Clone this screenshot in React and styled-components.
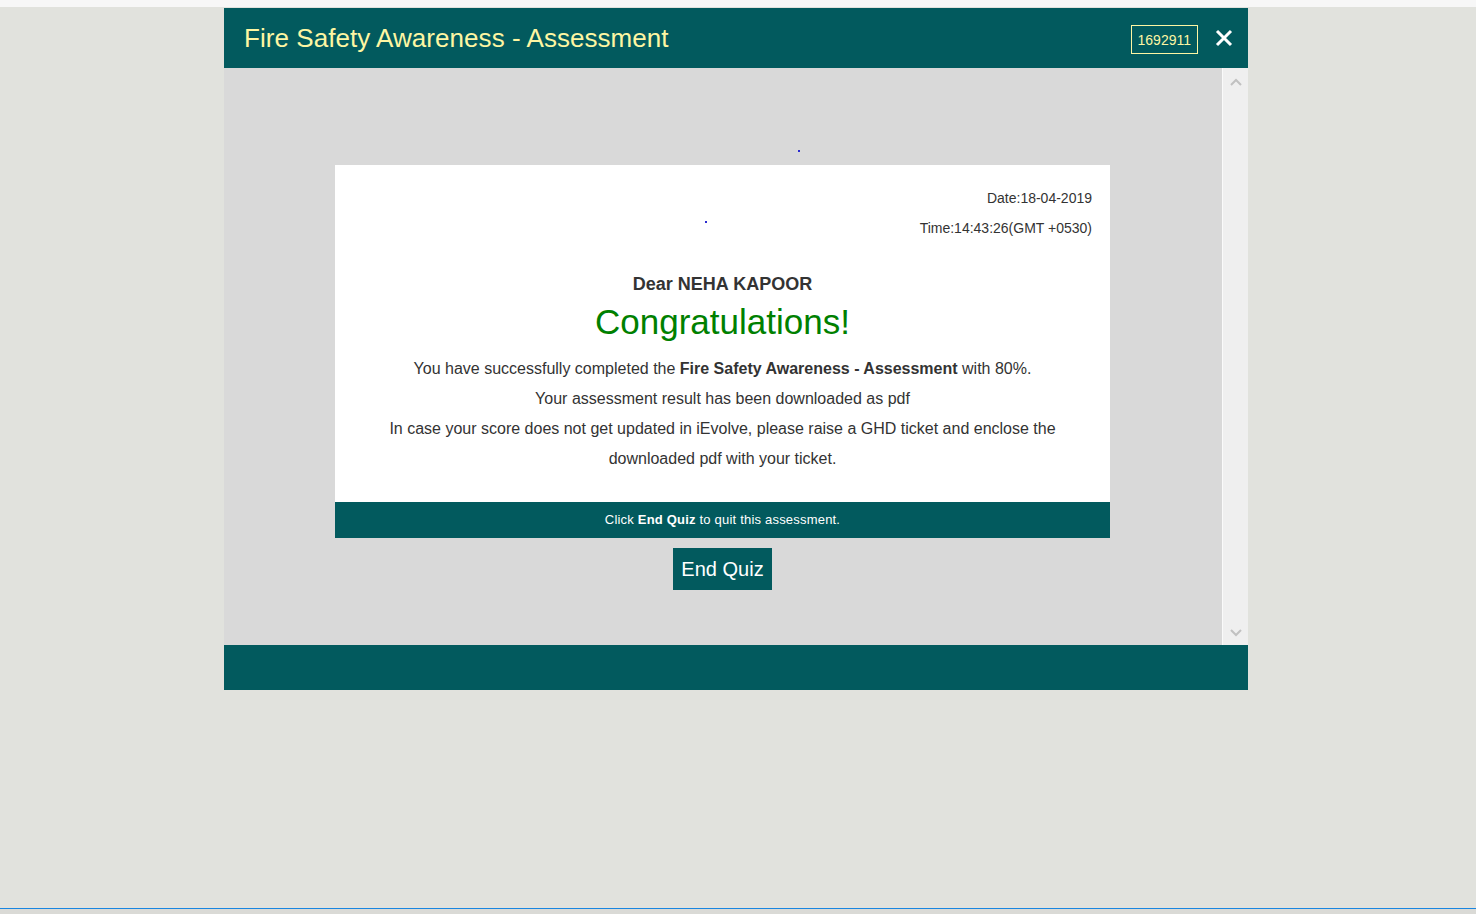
import styled, { createGlobalStyle } from "styled-components";

const GlobalStyle = createGlobalStyle`
  html, body {
    margin: 0;
    padding: 0;
    height: 100%;
    overflow: hidden;
  }
  body {
    font-family: "Liberation Sans", Arial, sans-serif;
    background: #e1e2dd;
  }
`;

const Page = styled.div`
  display: flex;
  flex-direction: column;
  height: 914px;
`;

const TopStrip = styled.div`
  height: 7px;
  background: #f7f7f7;
`;

const Stage = styled.div`
  flex: 1;
  display: flex;
  justify-content: flex-start;
  padding: 1px 0 0 224px;
`;

const BottomLine = styled.div`
  height: 5px;
  border-top: 1px solid #1a86e0;
  background: #dadad6;
`;

const Modal = styled.div`
  width: 1024px;
  display: flex;
  flex-direction: column;
  align-self: flex-start;
`;

const Header = styled.div`
  height: 60px;
  background: #025a5e;
  display: flex;
  align-items: center;
  padding: 0 14px 0 20px;
`;

const Title = styled.h1`
  flex: 1;
  margin: 0;
  font-size: 26px;
  font-weight: normal;
  color: #fdf6a3;
  letter-spacing: 0.05px;
`;

const Badge = styled.span`
  border: 1px solid #fdf6a3;
  color: #fdf6a3;
  font-size: 14px;
  padding: 5px 6px 4px;
  line-height: 18px;
  margin-right: 16px;
  margin-top: 2px;
`;

const Close = styled.button`
  background: none;
  border: none;
  padding: 0;
  width: 20px;
  height: 20px;
  cursor: pointer;
  display: flex;
  align-items: center;
  justify-content: center;
`;

const Body = styled.div`
  height: 577px;
  display: flex;
  background: #d9d9d9;
`;

const Scroller = styled.div`
  flex: 1;
  display: flex;
  flex-direction: column;
  align-items: center;
  padding: 97px 1px 0 0;
`;

const Track = styled.div`
  width: 25px;
  border-left: 1px solid #fafafa;
  background: #efefef;
  display: flex;
  flex-direction: column;
  justify-content: space-between;
  align-items: center;
  padding: 10px 0 8px;
`;

const Dot = styled.span`
  position: absolute;
  width: 2px;
  height: 2px;
  background: #2b2bd0;
  left: ${(p) => p.$x}px;
  top: ${(p) => p.$y}px;
`;

const Card = styled.div`
  position: relative;
  width: 775px;
  background: #fff;
`;

const CardInner = styled.div`
  padding: 18px 18px 28px;
  color: #333;
`;

const Meta = styled.div`
  text-align: right;
  font-size: 14px;
  line-height: 30px;
`;

const Dear = styled.div`
  text-align: center;
  font-size: 18px;
  font-weight: bold;
  line-height: 30px;
  margin-top: 26px;
`;

const Congrats = styled.div`
  text-align: center;
  font-size: 35px;
  line-height: 40px;
  color: #008000;
  margin: 3px 0 12px;
`;

const Message = styled.p`
  margin: 0;
  text-align: center;
  font-size: 16px;
  line-height: 30px;
`;

const Notice = styled.div`
  height: 36px;
  box-sizing: border-box;
  background: #025a5e;
  color: #fff;
  font-size: 13px;
  letter-spacing: 0.2px;
  display: flex;
  align-items: center;
  justify-content: center;
  padding-bottom: 1px;
`;

const EndButton = styled.button`
  margin-top: 10px;
  width: 99px;
  height: 42px;
  background: #025a5e;
  color: #fff;
  border: none;
  font-family: "Liberation Sans", Arial, sans-serif;
  font-size: 20px;
  cursor: pointer;
`;

const Footer = styled.div`
  height: 45px;
  background: #025a5e;
`;

const Chevron = ({ up }) => (
  <svg width="12" height="8" viewBox="0 0 12 8">
    <path
      d={up ? "M1 7 L6 2 L11 7" : "M1 1 L6 6 L11 1"}
      fill="none"
      stroke="#c1c1c1"
      strokeWidth="2"
    />
  </svg>
);

export default function App() {
  return (
    <>
      <GlobalStyle />
      <Page>
        <TopStrip />
        <Stage>
          <Modal>
            <Header>
              <Title>Fire Safety Awareness - Assessment</Title>
              <Badge>1692911</Badge>
              <Close aria-label="close">
                <svg width="18" height="18" viewBox="0 0 18 18">
                  <path d="M2 2 L16 16 M16 2 L2 16" stroke="#fff" strokeWidth="3" />
                </svg>
              </Close>
            </Header>
            <Body>
              <Scroller>
                <Card>
                  <Dot $x={463} $y={-15} />
                  <Dot $x={370} $y={56} />
                  <CardInner>
                    <Meta>Date:18-04-2019</Meta>
                    <Meta>Time:14:43:26(GMT +0530)</Meta>
                    <Dear>Dear NEHA KAPOOR</Dear>
                    <Congrats>Congratulations!</Congrats>
                    <Message>
                      You have successfully completed the{" "}
                      <b>Fire Safety Awareness - Assessment</b> with 80%.
                    </Message>
                    <Message>Your assessment result has been downloaded as pdf</Message>
                    <Message>
                      In case your score does not get updated in iEvolve, please raise a GHD
                      ticket and enclose the
                      <br />
                      downloaded pdf with your ticket.
                    </Message>
                  </CardInner>
                  <Notice>
                    Click&nbsp;<b>End Quiz</b>&nbsp;to quit this assessment.
                  </Notice>
                </Card>
                <EndButton>End Quiz</EndButton>
              </Scroller>
              <Track>
                <Chevron up />
                <Chevron />
              </Track>
            </Body>
            <Footer />
          </Modal>
        </Stage>
        <BottomLine />
      </Page>
    </>
  );
}
